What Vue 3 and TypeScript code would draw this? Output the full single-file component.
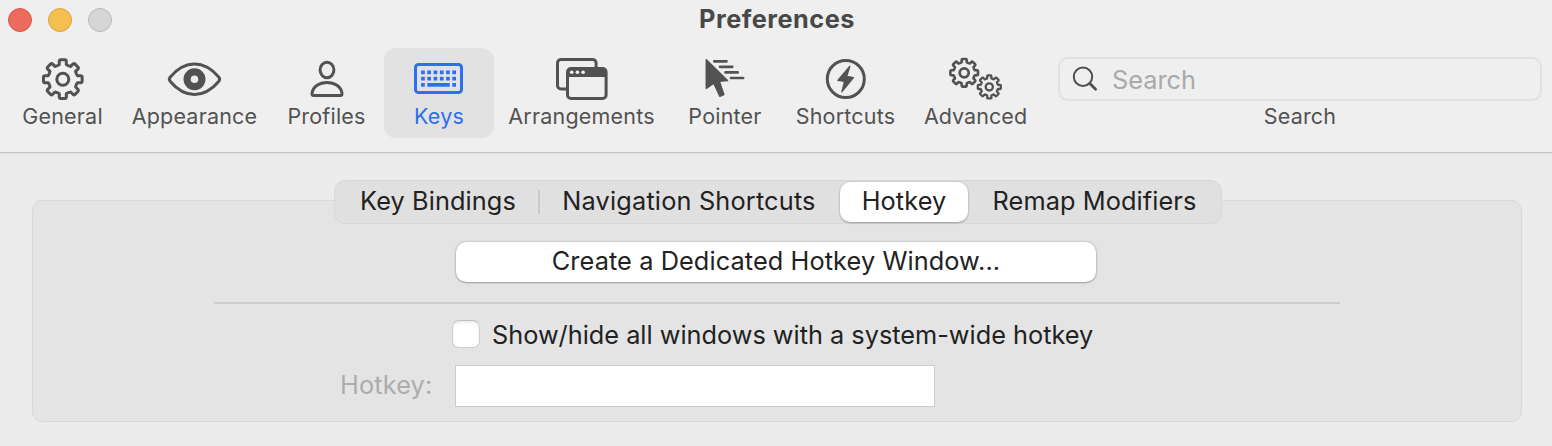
<script setup lang="ts">
import { ref } from 'vue'

interface ToolItem {
  id: string
  label: string
}

const tools: ToolItem[] = [
  { id: 'general', label: 'General' },
  { id: 'appearance', label: 'Appearance' },
  { id: 'profiles', label: 'Profiles' },
  { id: 'keys', label: 'Keys' },
  { id: 'arrangements', label: 'Arrangements' },
  { id: 'pointer', label: 'Pointer' },
  { id: 'shortcuts', label: 'Shortcuts' },
  { id: 'advanced', label: 'Advanced' },
]
const activeTool = ref('keys')

const tabs: ToolItem[] = [
  { id: 'bindings', label: 'Key Bindings' },
  { id: 'navigation', label: 'Navigation Shortcuts' },
  { id: 'hotkey', label: 'Hotkey' },
  { id: 'remap', label: 'Remap Modifiers' },
]
const activeTab = ref('hotkey')

const query = ref('')
const systemWide = ref(false)
const hotkey = ref('')

// Outline of an eight-toothed gear: rounded tooth corners, curved valleys.
function gearPath(cx: number, cy: number, outer: number, root: number): string {
  const at = (r: number, deg: number): string => {
    const a = ((deg - 90) * Math.PI) / 180
    return `${(cx + r * Math.cos(a)).toFixed(2)} ${(cy + r * Math.sin(a)).toFixed(2)}`
  }
  let d = ''
  for (let i = 0; i < 8; i++) {
    const t = i * 45
    d += `${i === 0 ? 'M' : 'L'}${at(root, t - 13.5)}`
    d += `L${at(outer * 0.95, t - 11)}Q${at(outer, t - 10)} ${at(outer, t - 7)}`
    d += `L${at(outer, t + 7)}Q${at(outer, t + 10)} ${at(outer * 0.95, t + 11)}`
    d += `L${at(root, t + 13.5)}Q${at(root * 0.95, t + 22.5)} ${at(root, t + 31.5)}`
  }
  return d + 'Z'
}

const keyColumns = [28, 34.2, 40.5, 46.8, 53, 59.2].map((x) => x - 13.6)
</script>

<template>
  <div class="window">
    <header class="header">
      <div class="titlebar">
        <div class="lights">
          <span class="light close"></span>
          <span class="light minimize"></span>
          <span class="light zoom"></span>
        </div>
        <h1 class="title">Preferences</h1>
      </div>

      <div class="toolbar">
        <button
          v-for="tool in tools"
          :key="tool.id"
          type="button"
          class="tool"
          :class="[tool.id, { active: tool.id === activeTool }]"
          @click="activeTool = tool.id"
        >
          <svg class="icon" viewBox="0.5 0 60 52" width="60" height="52" fill="none" stroke="currentColor" stroke-width="3" stroke-linejoin="round" stroke-linecap="round">
            <template v-if="tool.id === 'general'">
              <path :d="gearPath(30.3, 27.2, 19.5, 15)" />
              <circle cx="30.3" cy="27.2" r="6" />
            </template>
            <template v-else-if="tool.id === 'appearance'">
              <path d="M5.6 25.2C12.5 17 20.5 12 30 12s17.5 5 24.4 13.2q1.5 2 0 4C47.5 37.4 39.5 42.4 30 42.4S12.5 37.4 5.6 29.2q-1.5-2 0-4Z" />
              <circle cx="30" cy="27.2" r="7.4" stroke-width="7.2" />
            </template>
            <template v-else-if="tool.id === 'profiles'">
              <ellipse cx="30.5" cy="18" rx="6.9" ry="7.7" />
              <path d="M17 43.5h27q1.8 0 1.5-2.2C44.5 34.5 38 30.5 30.5 30.5S16.5 34.5 15.5 41.3q-.3 2.2 1.5 2.2Z" />
            </template>
            <template v-else-if="tool.id === 'keys'">
              <rect x="7" y="12.5" width="46" height="28" rx="3" />
              <g fill="currentColor" stroke="none">
                <rect v-for="x in keyColumns" :key="`a${x}`" :x="x - 1.8" y="18.5" width="3.7" height="3.7" />
                <rect v-for="x in keyColumns" :key="`b${x}`" :x="x - 1.8" y="24.8" width="3.7" height="3.7" />
                <rect x="12.6" y="31" width="3.7" height="3.7" />
                <rect x="18.8" y="31" width="22.5" height="3.7" />
                <rect x="43.8" y="31" width="3.7" height="3.7" />
              </g>
            </template>
            <template v-else-if="tool.id === 'arrangements'">
              <rect x="6" y="7.5" width="38.6" height="29.4" rx="3.5" />
              <rect x="16" y="16.5" width="38.6" height="30" rx="3.5" fill="#efefef" />
              <path d="M16 25V19.5q0-3 3-3h32.6q3 0 3 3V25Z" fill="currentColor" stroke="none" />
              <g fill="#f4f4f4" stroke="none">
                <circle cx="20.2" cy="20.3" r="1.8" />
                <circle cx="25.9" cy="20.3" r="1.8" />
                <circle cx="31.6" cy="20.3" r="1.8" />
              </g>
            </template>
            <template v-else-if="tool.id === 'pointer'">
              <path d="M11.8 7.8 33 28.6 24.8 29.3 29.3 42.5 25.3 44.2 19.3 31.2 11.8 36.4Z" fill="currentColor" stroke-width="1.5" />
              <path d="M19.8 9.3H32M25.5 14.8H37.8M31 20.4H43.2M36.5 26H48.6" stroke-width="2.7" />
            </template>
            <template v-else-if="tool.id === 'shortcuts'">
              <circle cx="30.3" cy="27" r="18.5" />
              <path d="M34.4 14.2 22.3 28.3 29 29.3 26.3 39.8 38 25.5 31.3 24.3Z" fill="currentColor" stroke-width="1.2" />
            </template>
            <template v-else>
              <path :d="gearPath(18.7, 20.8, 13.9, 10.9)" stroke-width="2.6" />
              <circle cx="18.7" cy="20.8" r="4.5" stroke-width="2.7" />
              <path :d="gearPath(43.8, 34.9, 11.6, 8.9)" stroke-width="2.3" />
              <circle cx="43.8" cy="34.9" r="3.6" stroke-width="2.3" />
            </template>
          </svg>
          <span class="label">{{ tool.label }}</span>
        </button>

        <div class="search">
          <label class="search-box">
            <svg width="28" height="28" viewBox="0 0 28 28" fill="none" stroke="#505050" stroke-linecap="round">
              <circle cx="12" cy="11.8" r="9.2" stroke-width="2" />
              <path d="M18.8 18.5 24.6 24.3" stroke-width="2.8" />
            </svg>
            <input v-model="query" type="text" placeholder="Search" />
          </label>
          <span class="label">Search</span>
        </div>
      </div>
    </header>

    <main class="content">
      <nav class="tabs">
        <button
          v-for="tab in tabs"
          :key="tab.id"
          type="button"
          class="tab"
          :class="[tab.id, { selected: tab.id === activeTab }]"
          @click="activeTab = tab.id"
        >{{ tab.label }}</button>
      </nav>

      <section class="panel">
        <button type="button" class="create">Create a Dedicated Hotkey Window...</button>
        <hr class="divider" />
        <label class="check">
          <input v-model="systemWide" type="checkbox" />
          <span>Show/hide all windows with a system-wide hotkey</span>
        </label>
        <div class="field">
          <span class="field-label">Hotkey:</span>
          <input v-model="hotkey" type="text" disabled />
        </div>
      </section>
    </main>
  </div>
</template>

<style>
body {
  margin: 0;
}
</style>

<style scoped>
.window,
.window * {
  box-sizing: border-box;
}
.window {
  width: 1552px;
  height: 446px;
  overflow: hidden;
  background: #ececec;
  color: #222;
  font-family: Inter, "Liberation Sans", sans-serif;
  font-size: 25.3px;
}
button,
input {
  font: inherit;
  color: inherit;
  margin: 0;
  padding: 0;
  border: 0;
  background: none;
  appearance: none;
  outline: none;
}
.header {
  height: 154px;
  background: #efefef;
  border-bottom: 1px solid #dedede;
  box-shadow: inset 0 -1px #c4c4c4;
}
.titlebar {
  display: grid;
  grid-template-columns: 1fr auto 1fr;
  align-items: center;
  height: 40px;
  padding: 0 6px 2px 8px;
}
.lights {
  display: flex;
  gap: 16px;
  padding-top: 2px;
}
.light {
  width: 24px;
  height: 24px;
  border-radius: 50%;
  border: 1px solid;
}
.close { background: #ed6a5e; border-color: #d9564c; }
.minimize { background: #f5bf4f; border-color: #dba43c; }
.zoom { background: #d6d6d6; border-color: #bababa; }
.title {
  margin: 0;
  font-size: 25.3px;
  line-height: 32px;
  font-weight: 700;
  letter-spacing: 0.5px;
  color: #484848;
}
.toolbar {
  display: flex;
  height: 90px;
  margin-top: 8px;
  padding-left: 8px;
}
.tool {
  display: flex;
  flex-direction: column;
  align-items: center;
  flex: none;
  padding-top: 4px;
  color: #525252;
  border-radius: 12px;
}
.tool.active {
  background: #e2e2e2;
  color: #2c6ff2;
}
.icon {
  display: block;
  height: 52px;
}
.label {
  margin-top: -1px;
  font-size: 21.5px;
  line-height: 26px;
  letter-spacing: 0.2px;
  white-space: nowrap;
}
.general { width: 109px; }
.appearance { width: 155px; }
.profiles { width: 109px; }
.keys { width: 110px; margin-left: 3px; }
.arrangements { width: 175px; }
.pointer { width: 112px; }
.shortcuts { width: 129px; }
.advanced { width: 131px; }
.advanced .label { letter-spacing: 0.05px; }
.search {
  width: 484px;
  margin: 9px 0 0 17px;
  display: flex;
  flex-direction: column;
  align-items: center;
  color: #525252;
}
.search-box {
  display: flex;
  align-items: center;
  width: 100%;
  height: 44px;
  margin-bottom: 3px;
  padding-left: 11px;
  border: 2px solid #e1e1e1;
  border-radius: 10px;
}
.search-box input {
  flex: 1;
  margin-left: 13px;
}
.search-box input::placeholder {
  color: #a9a9a9;
  opacity: 1;
}
.content {
  display: flex;
  flex-direction: column;
  padding: 26px 30px 0 32px;
}
.tabs {
  display: flex;
  width: 888px;
  height: 44px;
  margin-left: 302px;
  padding: 2px;
  border-radius: 12px;
  background: #e0e0e0;
  box-shadow: inset 0 0 0 1px #d8d8d8;
  z-index: 1;
}
.tab {
  height: 40px;
  padding-bottom: 2px;
  line-height: 38px;
  letter-spacing: 0.1px;
  white-space: nowrap;
}
.bindings {
  width: 204px;
  background: linear-gradient(#cbcbcb, #cbcbcb) no-repeat 202px 8px / 2px 24px;
}
.navigation { width: 298px; letter-spacing: 0.18px; }
.hotkey { width: 128px; margin: 0 1px 0 2px; }
.remap { width: 251px; }
.selected {
  background: #fff;
  border-radius: 10px;
  box-shadow: 0 0 2px rgba(0, 0, 0, 0.2), 0 1px 2px rgba(0, 0, 0, 0.25);
}
.panel {
  display: flex;
  flex-direction: column;
  height: 222px;
  margin-top: -24px;
  padding-top: 42px;
  border: 1px solid #d9d9d9;
  border-radius: 10px;
  background: #e4e4e4;
}
.create {
  width: 640px;
  height: 40px;
  margin: -1px 0 0 423px;
  padding-bottom: 2px;
  line-height: 38px;
  letter-spacing: 0.1px;
  border-radius: 10px;
  background: #fff;
  box-shadow: 0 0 2px rgba(0, 0, 0, 0.3), 0 1px 2px rgba(0, 0, 0, 0.25);
}
.divider {
  width: 1126px;
  height: 2px;
  margin: 20px 0 0 181px;
  border: 0;
  background: #cdcdcd;
}
.check {
  display: flex;
  align-items: center;
  height: 28px;
  margin: 16px 0 0 419px;
  white-space: nowrap;
}
.check input {
  width: 28px;
  height: 28px;
  margin-right: 12px;
  border-radius: 7px;
  border: 1px solid #cfcfcf;
  border-top-color: #bdbdbd;
  background: #fff;
  box-shadow: inset 0 2px 3px rgba(0, 0, 0, 0.08);
}
.field {
  display: flex;
  align-items: center;
  height: 42px;
  margin: 17px 0 0 307px;
}
.field-label {
  width: 115px;
  padding-bottom: 2px;
  line-height: 32px;
  letter-spacing: 0.15px;
  color: #acacac;
}
.field input {
  width: 480px;
  height: 42px;
  border: 1px solid #cbcbcb;
  background: #fff;
}
</style>
